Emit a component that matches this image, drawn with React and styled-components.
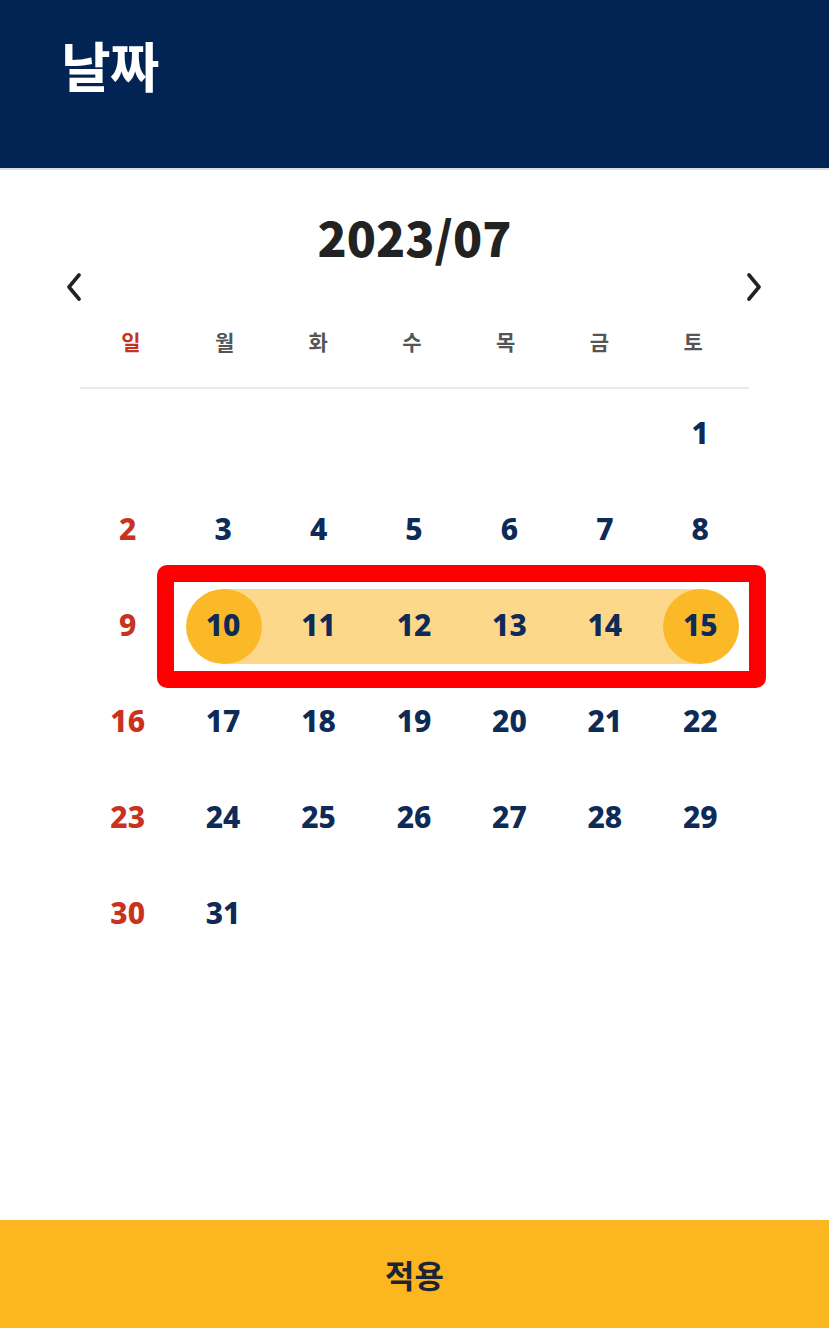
import styled, { createGlobalStyle } from 'styled-components';

const GlobalStyle = createGlobalStyle`
  html, body {
    margin: 0;
    padding: 0;
    background: #ffffff;
  }
  body {
    font-family: "Noto Sans", "Noto Sans CJK KR", sans-serif;
  }
`;

const Page = styled.div`
  width: 100vw;
  min-height: 100vh;
  display: flex;
  flex-direction: column;
`;

const Header = styled.header`
  height: 170px;
  background: #022454;
  border-bottom: 2px solid #d5dce6;
  padding: 27px 0 0 61px;
  box-sizing: border-box;
`;

const Title = styled.h1`
  margin: 0;
  color: #ffffff;
  font-family: "Noto Sans CJK KR", sans-serif;
  font-size: 54px;
  font-weight: 700;
  line-height: 76px;
  letter-spacing: -1px;
`;

const Main = styled.main`
  flex: 1;
  display: flex;
  flex-direction: column;
`;

const MonthTitle = styled.div`
  margin-top: 36px;
  text-align: center;
  font-family: "Noto Sans CJK KR", sans-serif;
  font-size: 48px;
  font-weight: 900;
  color: #222222;
  line-height: 60px;
`;

const NavRow = styled.div`
  display: flex;
  justify-content: space-between;
  padding: 0 67px 0 66px;
  height: 30px;
  margin-top: 6px;
`;

const NavButton = styled.button`
  border: none;
  background: none;
  padding: 0;
  width: 16px;
  height: 30px;
  cursor: pointer;
  display: flex;
  align-items: center;
  justify-content: center;
`;

const WeekRow = styled.div`
  display: grid;
  grid-template-columns: repeat(7, 1fr);
  padding: 0 89px 0 84px;
  margin-top: 23px;
`;

const WeekDay = styled.div`
  text-align: center;
  font-family: "Noto Sans CJK KR", sans-serif;
  font-size: 21px;
  font-weight: 700;
  line-height: 32px;
  color: ${(p) => (p.$sunday ? '#c8321e' : '#555555')};
`;

const Divider = styled.hr`
  margin: 30px 80px 0 80px;
  border: none;
  border-top: 2px solid #e8e8e8;
`;

const GridWrap = styled.div`
  position: relative;
  padding: 0 81px 0 80px;
  margin-top: -1px;
`;

const DateGrid = styled.div`
  display: grid;
  grid-template-columns: repeat(7, 1fr);
  grid-auto-rows: 96px;
`;

const Cell = styled.div`
  position: relative;
  display: flex;
  align-items: center;
  justify-content: center;
  padding-bottom: 8px;
  box-sizing: border-box;
`;

const Band = styled.div`
  position: absolute;
  top: 9px;
  height: 75px;
  left: ${(p) => (p.$edge === 'start' ? '50%' : '0')};
  right: ${(p) => (p.$edge === 'end' ? '50%' : '0')};
  background: #fed88a;
`;

const Circle = styled.div`
  position: absolute;
  top: 9px;
  left: 50%;
  width: 76px;
  height: 75px;
  margin-left: -37px;
  border-radius: 50%;
  background: #fbb928;
`;

const DayNum = styled.span`
  position: relative;
  font-family: "Noto Sans", sans-serif;
  font-size: 30px;
  font-weight: 800;
  color: ${(p) => (p.$sunday ? '#c8321e' : '#0e2b58')};
`;

const Marker = styled.div`
  position: absolute;
  left: 157px;
  top: 177px;
  width: 609px;
  height: 123px;
  box-sizing: border-box;
  border: 17px solid #ff0000;
  border-radius: 10px;
  pointer-events: none;
`;

const ApplyButton = styled.button`
  height: 108px;
  border: none;
  background: #fcb61f;
  font-family: "Noto Sans CJK KR", sans-serif;
  font-size: 32px;
  font-weight: 700;
  color: #1b2536;
  cursor: pointer;
`;

const Chevron = ({ dir }) => (
  <svg width="16" height="28" viewBox="0 0 16 28" fill="none">
    <polyline
      points={dir === 'left' ? '13,2 3,14 13,26' : '3,2 13,14 3,26'}
      stroke="#222222"
      strokeWidth="3.6"
      strokeLinecap="round"
      strokeLinejoin="round"
    />
  </svg>
);

const weekDays = ['일', '월', '화', '수', '목', '금', '토'];

const rangeStart = 10;
const rangeEnd = 15;

const buildCells = () => {
  const cells = [];
  for (let i = 0; i < 6; i += 1) cells.push(null);
  for (let d = 1; d <= 31; d += 1) cells.push(d);
  return cells;
};

const App = () => {
  const cells = buildCells();

  return (
    <Page>
      <GlobalStyle />
      <Header>
        <Title>날짜</Title>
      </Header>
      <Main>
        <MonthTitle>2023/07</MonthTitle>
        <NavRow>
          <NavButton aria-label="이전 달">
            <Chevron dir="left" />
          </NavButton>
          <NavButton aria-label="다음 달">
            <Chevron dir="right" />
          </NavButton>
        </NavRow>
        <WeekRow>
          {weekDays.map((w, i) => (
            <WeekDay key={w} $sunday={i === 0}>
              {w}
            </WeekDay>
          ))}
        </WeekRow>
        <Divider />
        <GridWrap>
          <DateGrid>
            {cells.map((d, i) => {
              if (d === null) return <Cell key={`e${i}`} />;
              const inRange = d >= rangeStart && d <= rangeEnd;
              const edge = d === rangeStart ? 'start' : d === rangeEnd ? 'end' : null;
              return (
                <Cell key={d}>
                  {inRange && <Band $edge={edge} />}
                  {edge && <Circle />}
                  <DayNum $sunday={i % 7 === 0}>{d}</DayNum>
                </Cell>
              );
            })}
          </DateGrid>
          <Marker />
        </GridWrap>
      </Main>
      <ApplyButton>적용</ApplyButton>
    </Page>
  );
};

export default App;
